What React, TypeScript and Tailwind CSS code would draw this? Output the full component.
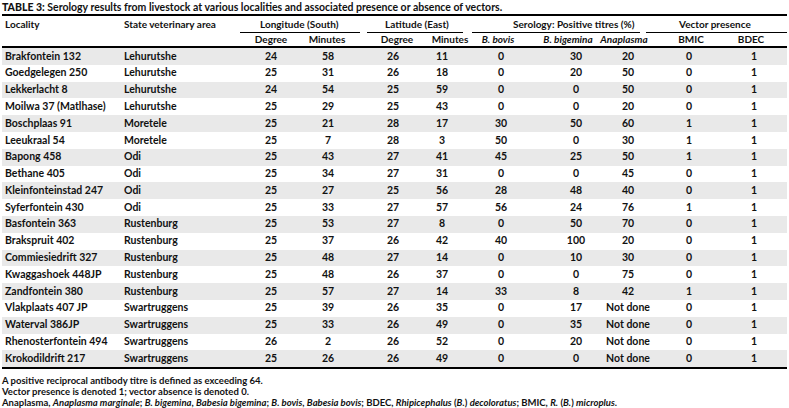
import React from "react";

const rows = [
  ["Brakfontein 132", "Lehurutshe", "24", "58", "26", "11", "0", "30", "20", "0", "1"],
  ["Goedgelegen 250", "Lehurutshe", "25", "31", "26", "18", "0", "20", "50", "0", "1"],
  ["Lekkerlacht 8", "Lehurutshe", "24", "54", "25", "59", "0", "0", "50", "0", "1"],
  ["Moilwa 37 (Matlhase)", "Lehurutshe", "25", "29", "25", "43", "0", "0", "20", "0", "1"],
  ["Boschplaas 91", "Moretele", "25", "21", "28", "17", "30", "50", "60", "1", "1"],
  ["Leeukraal 54", "Moretele", "25", "7", "28", "3", "50", "0", "30", "1", "1"],
  ["Bapong 458", "Odi", "25", "43", "27", "41", "45", "25", "50", "1", "1"],
  ["Bethane 405", "Odi", "25", "34", "27", "31", "0", "0", "45", "0", "1"],
  ["Kleinfonteinstad 247", "Odi", "25", "27", "25", "56", "28", "48", "40", "0", "1"],
  ["Syferfontein 430", "Odi", "25", "33", "27", "57", "56", "24", "76", "1", "1"],
  ["Basfontein 363", "Rustenburg", "25", "53", "27", "8", "0", "50", "70", "0", "1"],
  ["Brakspruit 402", "Rustenburg", "25", "37", "26", "42", "40", "100", "20", "0", "1"],
  ["Commiesiedrift 327", "Rustenburg", "25", "48", "27", "14", "0", "10", "30", "0", "1"],
  ["Kwaggashoek 448JP", "Rustenburg", "25", "48", "26", "37", "0", "0", "75", "0", "1"],
  ["Zandfontein 380", "Rustenburg", "25", "57", "27", "14", "33", "8", "42", "1", "1"],
  ["Vlakplaats 407 JP", "Swartruggens", "25", "39", "26", "35", "0", "17", "Not done", "0", "1"],
  ["Waterval 386JP", "Swartruggens", "25", "33", "26", "49", "0", "35", "Not done", "0", "1"],
  ["Rhenosterfontein 494", "Swartruggens", "26", "2", "26", "52", "0", "20", "Not done", "0", "1"],
  ["Krokodildrift 217", "Swartruggens", "25", "26", "26", "49", "0", "0", "Not done", "0", "1"],
];

// gaps before each numeric data cell (cells are 48px wide)
const dataGap = ["", "ml-[9px]", "ml-[17px]", "ml-[1px]", "ml-[11px]", "ml-[27px]", "ml-[4px]", "ml-[13px]", "ml-[17px]"];
// gaps before each sub-header cell (cells are 44px wide)
const headGap = ["ml-[2px]", "ml-[12px]", "ml-[26px]", "ml-[9px]", "ml-[4px]", "ml-[26px]", "ml-[12px]", "ml-[23px]", "ml-[16px]"];

const subHeads: React.ReactNode[] = [
  "Degree",
  "Minutes",
  "Degree",
  "Minutes",
  <i key="bb">B. bovis</i>,
  <i key="bg">B. bigemina</i>,
  <i key="an">Anaplasma</i>,
  "BMIC",
  "BDEC",
];

export default function App() {
  return (
    <div className="w-[789px] h-[408px] overflow-hidden bg-white px-[2px] pt-[1px] text-[#111] font-bold font-['Lato',_'Liberation_Sans',_sans-serif]">
      <div className="h-[13px] text-[10.5px] leading-[13px] whitespace-nowrap">
        <span className="font-black">TABLE 3:</span> Serology results from livestock at various localities and associated presence or absence of vectors.
      </div>

      <div className="border-t-2 border-black text-[10px]">
        {/* group headers */}
        <div className="flex h-[17px] items-center">
          <div className="w-[120px] pl-[3px]">Locality</div>
          <div className="w-[118px] pl-[2px]">State veterinary area</div>
          <div className="w-[120px] h-full flex items-center pl-[20px] border-b border-black">Longitude (South)</div>
          <div className="ml-[7px] w-[96px] h-full flex items-center pl-[18px] border-b border-black">Latitude (East)</div>
          <div className="ml-[9px] w-[168px] h-full flex items-center pl-[41px] border-b border-black">Serology: Positive titres (%)</div>
          <div className="ml-[6px] flex-1 h-full flex items-center pl-[33px] border-b border-black">Vector presence</div>
        </div>

        {/* sub headers */}
        <div className="flex h-[15px] items-center border-b-2 border-black">
          <div className="w-[120px]" />
          <div className="w-[125px]" />
          {subHeads.map((h, i) => (
            <div key={i} className={`${headGap[i]} w-[44px] flex justify-center whitespace-nowrap`}>
              {h}
            </div>
          ))}
        </div>

        {/* body */}
        <div className="text-[10.5px]">
          {rows.map((r, ri) => (
            <div key={ri} className={`flex h-[16.8px] items-center ${ri % 2 === 0 ? "bg-[#e9e9e9]" : ""}`}>
              <div className="w-[120px] pl-[3px] whitespace-nowrap">{r[0]}</div>
              <div className="w-[125px] pl-[2px]">{r[1]}</div>
              {r.slice(2).map((v, i) => (
                <div key={i} className={`${dataGap[i]} w-[48px] flex justify-center whitespace-nowrap`}>
                  {v}
                </div>
              ))}
            </div>
          ))}
        </div>
      </div>

      <div className="border-t-2 border-black pt-[6px] text-[9.5px] leading-[11px]">
        <div>A positive reciprocal antibody titre is defined as exceeding 64.</div>
        <div>Vector presence is denoted 1; vector absence is denoted 0.</div>
        <div>
          Anaplasma, <i>Anaplasma marginale</i>; <i>B. bigemina</i>, <i>Babesia bigemina</i>; <i>B. bovis</i>,{" "}
          <i>Babesia bovis</i>; BDEC, <i>Rhipicephalus</i> (<i>B.</i>) <i>decoloratus</i>; BMIC, <i>R.</i> (<i>B.</i>){" "}
          <i>microplus</i>.
        </div>
      </div>
    </div>
  );
}
